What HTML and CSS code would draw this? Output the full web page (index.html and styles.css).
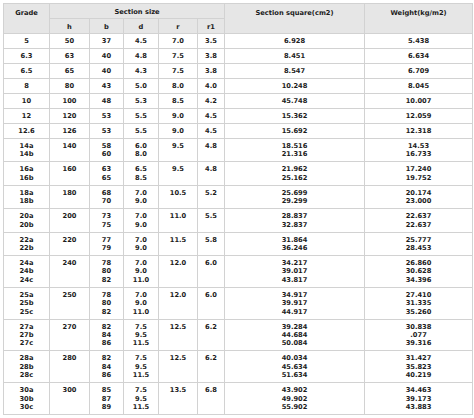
FILE: index.html
```html
<!DOCTYPE html>
<html>
<head>
<meta charset="utf-8">
<link rel="stylesheet" href="styles.css">
</head>
<body>
<div class="wrap">
<table class="spec">
<colgroup>
<col class="c-grade"><col class="c-h"><col class="c-b"><col class="c-d"><col class="c-r"><col class="c-r1"><col class="c-sq"><col class="c-w">
</colgroup>
<thead>
<tr class="h1"><th rowspan="2">Grade</th><th colspan="5">Section size</th><th rowspan="2">Section square(cm2)</th><th rowspan="2">Weight(kg/m2)</th></tr>
<tr class="h2"><th>h</th><th>b</th><th>d</th><th>r</th><th>r1</th></tr>
</thead>
<tbody>
<tr><td>5</td><td>50</td><td>37</td><td>4.5</td><td>7.0</td><td>3.5</td><td>6.928</td><td>5.438</td></tr>
<tr><td>6.3</td><td>63</td><td>40</td><td>4.8</td><td>7.5</td><td>3.8</td><td>8.451</td><td>6.634</td></tr>
<tr><td>6.5</td><td>65</td><td>40</td><td>4.3</td><td>7.5</td><td>3.8</td><td>8.547</td><td>6.709</td></tr>
<tr><td>8</td><td>80</td><td>43</td><td>5.0</td><td>8.0</td><td>4.0</td><td>10.248</td><td>8.045</td></tr>
<tr><td>10</td><td>100</td><td>48</td><td>5.3</td><td>8.5</td><td>4.2</td><td>45.748</td><td>10.007</td></tr>
<tr><td>12</td><td>120</td><td>53</td><td>5.5</td><td>9.0</td><td>4.5</td><td>15.362</td><td>12.059</td></tr>
<tr><td>12.6</td><td>126</td><td>53</td><td>5.5</td><td>9.0</td><td>4.5</td><td>15.692</td><td>12.318</td></tr>
<tr class="r2"><td>14a<br>14b</td><td>140</td><td>58<br>60</td><td>6.0<br>8.0</td><td>9.5</td><td>4.8</td><td>18.516<br>21.316</td><td>14.53<br>16.733</td></tr>
<tr class="r2"><td>16a<br>16b</td><td>160</td><td>63<br>65</td><td>6.5<br>8.5</td><td>9.5</td><td>4.8</td><td>21.962<br>25.162</td><td>17.240<br>19.752</td></tr>
<tr class="r2"><td>18a<br>18b</td><td>180</td><td>68<br>70</td><td>7.0<br>9.0</td><td>10.5</td><td>5.2</td><td>25.699<br>29.299</td><td>20.174<br>23.000</td></tr>
<tr class="r2"><td>20a<br>20b</td><td>200</td><td>73<br>75</td><td>7.0<br>9.0</td><td>11.0</td><td>5.5</td><td>28.837<br>32.837</td><td>22.637<br>22.637</td></tr>
<tr class="r2"><td>22a<br>22b</td><td>220</td><td>77<br>79</td><td>7.0<br>9.0</td><td>11.5</td><td>5.8</td><td>31.864<br>36.246</td><td>25.777<br>28.453</td></tr>
<tr class="r3"><td>24a<br>24b<br>24c</td><td>240</td><td>78<br>80<br>82</td><td>7.0<br>9.0<br>11.0</td><td>12.0</td><td>6.0</td><td>34.217<br>39.017<br>43.817</td><td>26.860<br>30.628<br>34.396</td></tr>
<tr class="r3"><td>25a<br>25b<br>25c</td><td>250</td><td>78<br>80<br>82</td><td>7.0<br>9.0<br>11.0</td><td>12.0</td><td>6.0</td><td>34.917<br>39.917<br>44.917</td><td>27.410<br>31.335<br>35.260</td></tr>
<tr class="r3"><td>27a<br>27b<br>27c</td><td>270</td><td>82<br>84<br>86</td><td>7.5<br>9.5<br>11.5</td><td>12.5</td><td>6.2</td><td>39.284<br>44.684<br>50.084</td><td>30.838<br>.077<br>39.316</td></tr>
<tr class="r3"><td>28a<br>28b<br>28c</td><td>280</td><td>82<br>84<br>86</td><td>7.5<br>9.5<br>11.5</td><td>12.5</td><td>6.2</td><td>40.034<br>45.634<br>51.634</td><td>31.427<br>35.823<br>40.219</td></tr>
<tr class="r3"><td>30a<br>30b<br>30c</td><td>300</td><td>85<br>87<br>89</td><td>7.5<br>9.5<br>11.5</td><td>13.5</td><td>6.8</td><td>43.902<br>49.902<br>55.902</td><td>34.463<br>39.173<br>43.883</td></tr>
</tbody>
</table>
</div>
</body>
</html>
```
FILE: styles.css
```css
html, body {
  margin: 0;
  padding: 0;
  background: #ffffff;
}
.wrap {
  padding: 3px 2px 0 3px;
}
.spec {
  border-collapse: collapse;
  table-layout: fixed;
  width: 469px;
  font-family: "DejaVu Sans", Verdana, sans-serif;
  font-weight: bold;
  font-size: 6.7px;
  color: #1c1c1c;
}
.c-grade { width: 46px; }
.c-h { width: 40px; }
.c-b { width: 34px; }
.c-d { width: 35px; }
.c-r { width: 39px; }
.c-r1 { width: 27px; }
.c-sq { width: 140px; }
.c-w { width: 108px; }
.spec th, .spec td {
  border: 1px solid #d2d2d2;
  text-align: center;
  vertical-align: top;
  padding: 0;
  line-height: 8.4px;
}
.spec th {
  background: #e6e6e6;
  font-weight: bold;
}
.h1 th {
  height: 14px;
  padding-top: 5px;
}
.h1 th[colspan] {
  height: 10px;
  padding-top: 4px;
}
.h2 th {
  height: 10px;
  padding-top: 4px;
}
.spec td {
  padding-top: 3px;
  padding-bottom: 2.6px;
}
```
